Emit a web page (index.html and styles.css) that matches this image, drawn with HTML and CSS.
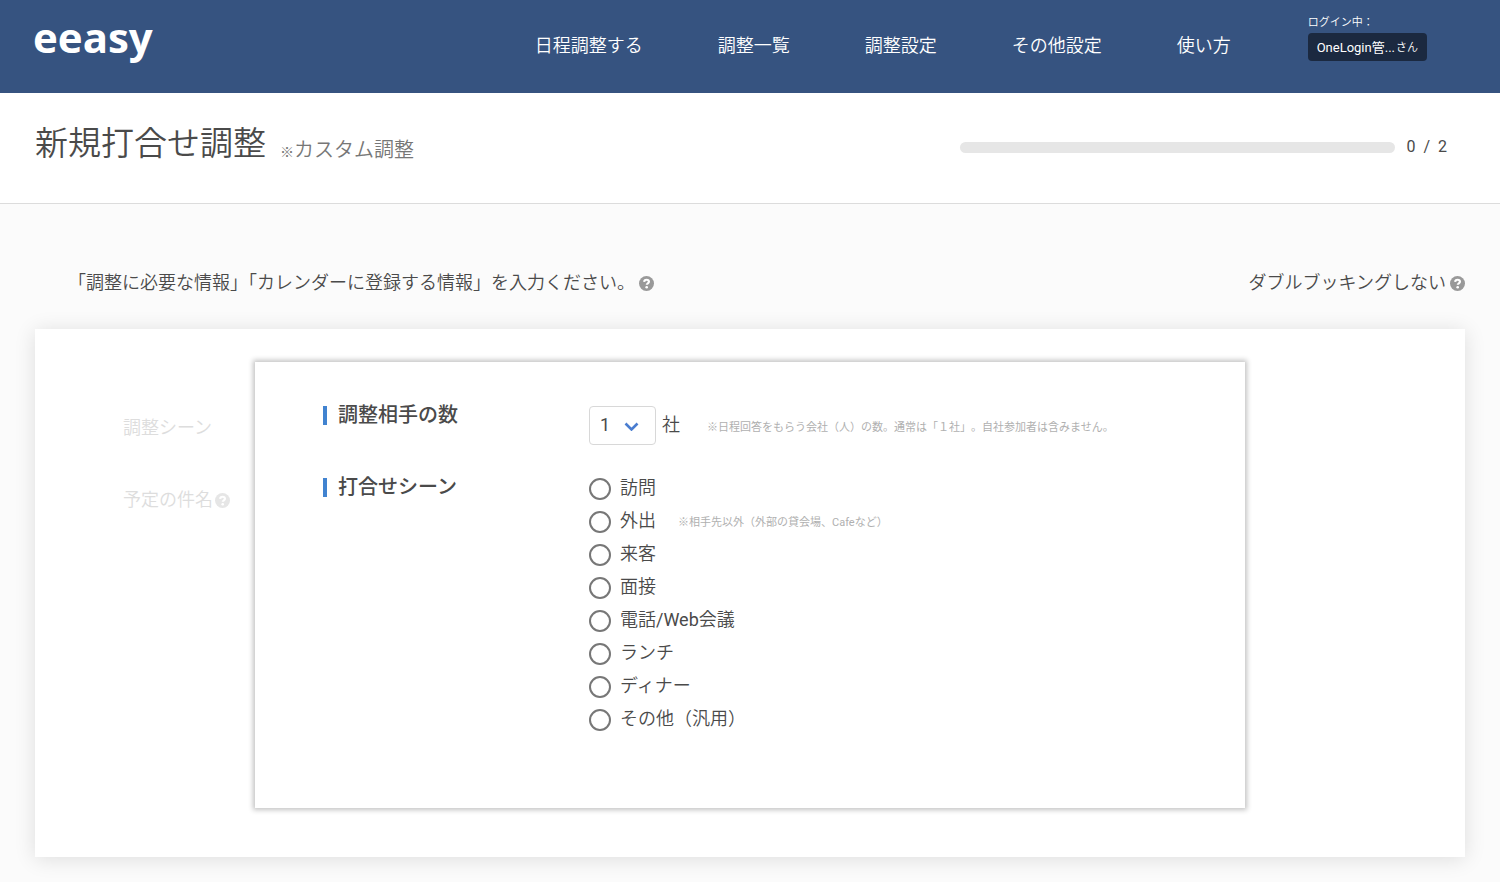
FILE: index.html
```html
<!DOCTYPE html>
<html lang="ja">
<head>
  <meta charset="UTF-8">
  <meta name="viewport" content="width=device-width, initial-scale=1.0">
  <title>eeasy</title>
  <link rel="stylesheet" href="styles.css">
</head>
<body>
<svg class="sprite" aria-hidden="true">
  <symbol id="help" viewBox="0 0 16 16">
    <circle cx="8" cy="8" r="8" fill="currentColor"/>
    <path d="M5.5 6.3C5.6 4.8 6.6 4 8 4c1.500 0 2.600.8 2.600 2.100 0 1.700-2.300 1.700-2.300 3.300" fill="none" stroke="#fff" stroke-width="2.300"/>
    <circle cx="8.200" cy="12" r="1.400" fill="#fff"/>
  </symbol>
</svg>

<header class="header">
  <a class="logo" href="#">eeasy</a>
  <nav class="nav">
    <a href="#">日程調整する</a>
    <a href="#">調整一覧</a>
    <a href="#">調整設定</a>
    <a href="#">その他設定</a>
    <a href="#">使い方</a>
  </nav>
  <div class="user">
    <span class="user-label">ログイン中：</span>
    <button class="user-button" type="button">OneLogin管...<span class="user-san">さん</span></button>
  </div>
</header>

<div class="title-bar">
  <h1>新規打合せ調整</h1>
  <p class="title-sub"><span class="mark">※</span>カスタム調整</p>
  <div class="steps">
    <div class="steps-bar"></div>
    <div class="steps-count"><span>0</span><span>/</span><span>2</span></div>
  </div>
</div>

<main class="main">
  <div class="guide">
    <p>「調整に必要な情報」「カレンダーに登録する情報」を入力ください。<svg class="help"><use href="#help"/></svg></p>
    <p>ダブルブッキングしない<svg class="help"><use href="#help"/></svg></p>
  </div>

  <div class="card">
    <ul class="back-labels">
      <li>調整シーン</li>
      <li>予定の件名<svg class="help"><use href="#help"/></svg></li>
    </ul>

    <form class="dialog">
      <div class="row">
        <h2><label for="company-count">調整相手の数</label></h2>
        <div class="field">
          <div class="select">
            <select id="company-count">
              <option>1</option>
              <option>2</option>
              <option>3</option>
            </select>
            <svg class="arrow" viewBox="0 0 14 9"><path d="M1 1.500l6 6 6-6" fill="none" stroke="#4a7dd0" stroke-width="2.600"/></svg>
          </div>
          <span class="unit">社</span>
          <span class="note">※日程回答をもらう会社（人）の数。通常は「１社」。自社参加者は含みません。</span>
        </div>
      </div>
      <div class="row">
        <h2 id="scene-title">打合せシーン</h2>
        <ul class="scenes" role="radiogroup" aria-labelledby="scene-title">
          <li><label><input type="radio" name="scene">訪問</label></li>
          <li><label><input type="radio" name="scene">外出</label><span class="note">※相手先以外（外部の貸会場、Cafeなど）</span></li>
          <li><label><input type="radio" name="scene">来客</label></li>
          <li><label><input type="radio" name="scene">面接</label></li>
          <li><label><input type="radio" name="scene"><span>電話<span class="latin">/Web</span>会議</span></label></li>
          <li><label><input type="radio" name="scene">ランチ</label></li>
          <li><label><input type="radio" name="scene">ディナー</label></li>
          <li><label><input type="radio" name="scene">その他（汎用）</label></li>
        </ul>
      </div>
    </form>
  </div>
</main>
</body>
</html>
```
FILE: styles.css
```css
* {
  box-sizing: border-box;
}
body {
  margin: 0;
  background-color: #fbfbfb;
  color: #4a4a4a;
  font-family: Roboto, "Noto Sans CJK JP", sans-serif;
  font-size: 18px;
  font-weight: 350;
  line-height: 24px;
}
h1, h2, p, ul {
  margin: 0;
  padding: 0;
}
ul {
  list-style: none;
}
.sprite {
  display: none;
}
.help {
  width: 15px;
  height: 15px;
  color: #999;
}
.latin {
  font-weight: 400;
}

/* header */
.header {
  display: flex;
  align-items: flex-start;
  height: 93px;
  padding: 0 73px 0 33px;
  background-color: #365380;
}
.logo {
  margin-top: 12px;
  color: #fff;
  font-family: "Open Sans", sans-serif;
  font-size: 42px;
  font-weight: 700;
  line-height: 50px;
  text-decoration: none;
}
.nav {
  display: flex;
  gap: 75px;
  margin: 34px 77px 0 auto;
}
.nav a {
  color: #fff;
  text-decoration: none;
}
.user {
  display: flex;
  flex-direction: column;
  margin-top: 15px;
  color: #fff;
}
.user-label {
  font-size: 11px;
  line-height: 16px;
}
.user-button {
  display: flex;
  align-items: center;
  gap: 1px;
  height: 28px;
  margin-top: 2px;
  padding: 0 9px 2px;
  border: none;
  border-radius: 4px;
  background-color: #1b2940;
  color: #fff;
  font-family: inherit;
  font-size: 13px;
  font-weight: 400;
}
.user-san {
  font-size: 11px;
  font-weight: 350;
}

/* page title */
.title-bar {
  display: flex;
  align-items: flex-start;
  height: 111px;
  padding: 27px 53px 0 35px;
  border-bottom: 1px solid #dcdcdc;
  background-color: #fff;
}
.title-bar h1 {
  font-size: 33px;
  font-weight: 350;
  line-height: 48px;
}
.title-sub {
  margin: 18px 0 0 14px;
  color: #777;
  font-size: 20px;
}
.mark {
  font-size: 14px;
  font-weight: 500;
}
.steps {
  display: flex;
  flex: 0 0 34.5%;
  align-items: center;
  gap: 11px;
  margin: 15px 0 0 auto;
}
.steps-bar {
  flex: 1;
  height: 11px;
  border-radius: 6px;
  background-color: #e6e6e6;
}
.steps-count {
  display: flex;
  gap: 8px;
  font-size: 16px;
  font-weight: 400;
}

/* content */
.main {
  padding: 67px 35px 25px;
}
.guide {
  display: flex;
  justify-content: space-between;
  margin-bottom: 34px;
  padding-left: 33px;
}
.guide p {
  display: flex;
  align-items: center;
  gap: 4px;
}
.card {
  display: grid;
  padding: 33px 0 49px;
  background-color: #fff;
  box-shadow: 0 2px 20px rgba(0, 0, 0, 0.12);
}
.back-labels,
.dialog {
  grid-area: 1 / 1;
}
.back-labels {
  padding: 54px 0 0 88px;
  color: #ddd;
}
.back-labels li {
  display: flex;
  align-items: center;
  gap: 2px;
  margin-bottom: 48px;
}
.back-labels .help {
  color: #e6e6e6;
}
.dialog {
  z-index: 1;
  justify-self: center;
  width: 100%;
  max-width: 990px;
  padding: 44px 68px 66px;
  background-color: #fff;
  box-shadow: 0 0 5px 2px rgba(0, 0, 0, 0.24);
}
.row {
  display: flex;
  align-items: flex-start;
}
.row + .row {
  margin-top: 33px;
}
.row h2 {
  flex: 0 0 266px;
  padding-left: 11px;
  border-left: 4px solid #4183d0;
  font-size: 20px;
  font-weight: 500;
  line-height: 19px;
}
.field {
  display: flex;
  align-items: center;
}
.select {
  position: relative;
}
.select select {
  width: 67px;
  height: 39px;
  padding: 0 10px 2px;
  border: 1px solid #d8d8d8;
  border-radius: 4px;
  background-color: #fff;
  color: #4a4a4a;
  font-family: inherit;
  font-size: 18px;
  font-weight: 400;
  appearance: none;
}
.arrow {
  position: absolute;
  top: 16px;
  right: 17px;
  width: 15px;
  height: 9px;
  pointer-events: none;
}
.unit {
  margin-left: 6px;
  padding-bottom: 2px;
}
.note {
  margin-left: 27px;
  padding-top: 4px;
  color: #b0b0b0;
  font-size: 11px;
  font-weight: 400;
  text-spacing-trim: space-all;
}
.scenes li {
  display: flex;
  align-items: flex-start;
  height: 33px;
}
.scenes label {
  display: flex;
  align-items: flex-start;
  gap: 9px;
  line-height: 20px;
}
.scenes .note {
  margin-left: 22px;
  padding-top: 0;
}
.scenes input {
  width: 22px;
  height: 22px;
  margin: 0;
  border: 2px solid #777;
  border-radius: 50%;
  appearance: none;
}
.scenes input:checked {
  background: radial-gradient(#4183d0 50%, #fff 55%);
}
```
